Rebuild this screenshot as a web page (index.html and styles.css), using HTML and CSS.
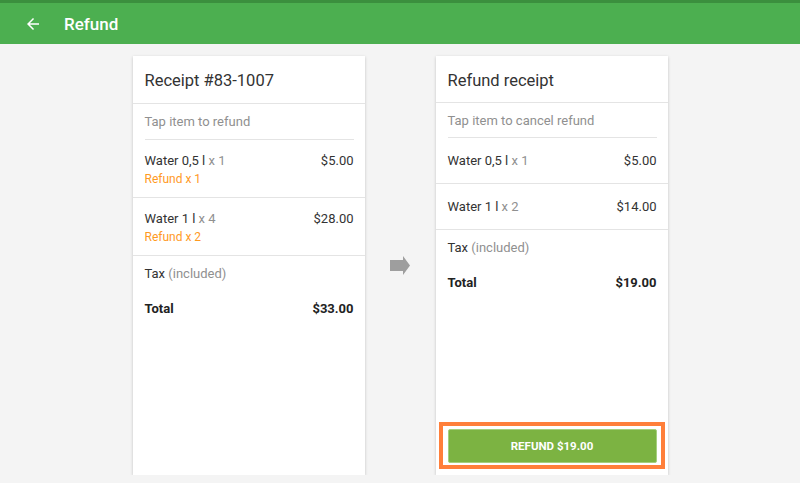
FILE: index.html
```html
<!DOCTYPE html>
<html lang="en">
<head>
    <meta charset="UTF-8">
    <title>Refund</title>
    <link rel="stylesheet" href="styles.css">
</head>
<body>
<header class="topbar">
    <svg class="back" viewBox="0 0 24 24" width="18" height="18">
        <path fill="#fff" d="M20 11H7.83l5.59-5.59L12 4l-8 8 8 8 1.41-1.41L7.83 13H20v-2z"/>
    </svg>
    <span class="title">Refund</span>
</header>

<main class="content">
    <section class="card">
        <h2 class="card-title">Receipt #83-1007</h2>
        <div class="hint">Tap item to refund</div>
        <div class="item">
            <div class="row">
                <span>Water 0,5 l <span class="qty">x 1</span></span>
                <span>$5.00</span>
            </div>
            <div class="refunded">Refund x 1</div>
        </div>
        <div class="item">
            <div class="row">
                <span>Water 1 l <span class="qty">x 4</span></span>
                <span>$28.00</span>
            </div>
            <div class="refunded">Refund x 2</div>
        </div>
        <div class="summary">
            <div class="row">Tax <span class="qty">&nbsp;(included)</span></div>
            <div class="row total">
                <span>Total</span>
                <span>$33.00</span>
            </div>
        </div>
    </section>

    <div class="arrow">
        <svg viewBox="0 0 20 19" width="20" height="19">
            <path fill="#9e9e9e" d="M0 4h13V0l7 9.5-7 9.5v-4H0z"/>
        </svg>
    </div>

    <section class="card refund-card">
        <h2 class="card-title">Refund receipt</h2>
        <div class="hint">Tap item to cancel refund</div>
        <div class="item short">
            <div class="row">
                <span>Water 0,5 l <span class="qty">x 1</span></span>
                <span>$5.00</span>
            </div>
        </div>
        <div class="item short">
            <div class="row">
                <span>Water 1 l <span class="qty">x 2</span></span>
                <span>$14.00</span>
            </div>
        </div>
        <div class="summary">
            <div class="row">Tax <span class="qty">&nbsp;(included)</span></div>
            <div class="row total">
                <span>Total</span>
                <span>$19.00</span>
            </div>
        </div>
        <div class="highlight">
            <button class="refund-btn" type="button">REFUND $19.00</button>
        </div>
    </section>
</main>
</body>
</html>
```

FILE: styles.css
```css
* {
    box-sizing: border-box;
}

body {
    margin: 0;
    background-color: #f4f4f4;
    font-family: Roboto, "Liberation Sans", sans-serif;
    color: #333;
}

.topbar {
    height: 44px;
    background-color: #4caf50;
    border-top: 3px solid #3b8f3e;
    display: flex;
    align-items: center;
    color: white;
}

.back {
    margin-left: 24px;
    margin-right: 22px;
}

.title {
    font-size: 17px;
    font-weight: 500;
}

.content {
    display: flex;
    justify-content: center;
    padding-top: 12px;
}

.card {
    width: 232px;
    height: 419px;
    background-color: white;
    box-shadow: 0 1px 3px rgba(0,0,0,0.2);
    display: flex;
    flex-direction: column;
}

.card-title {
    margin: 0;
    padding: 2px 12px 0;
    height: 48px;
    line-height: 46px;
    font-size: 16.5px;
    font-weight: 400;
    color: #333;
    border-bottom: 1px solid #e4e4e4;
}

.hint {
    margin: 0 11px 0 12px;
    padding-top: 1px;
    height: 36px;
    line-height: 34px;
    font-size: 13px;
    color: #909090;
    border-bottom: 1px solid #e4e4e4;
}

.item {
    padding: 12px 11px 9px 12px;
    border-bottom: 1px solid #e4e4e4;
    font-size: 13px;
}

.row {
    display: flex;
    justify-content: space-between;
    line-height: 18px;
}

.qty {
    color: #909090;
    margin-right: auto;
}

.refunded {
    color: #ff9a1f;
    font-size: 12px;
    line-height: 18px;
}

.summary {
    padding: 9px 11px 0 12px;
    font-size: 13px;
}

.total {
    margin-top: 17px;
    font-weight: bold;
    color: #222;
}

.arrow {
    width: 71px;
    display: flex;
    align-items: center;
    justify-content: center;
}

.refund-card .card-title {
    height: 47px;
    line-height: 45px;
}

.refund-card .hint {
    height: 35px;
    line-height: 33px;
}

.item.short {
    padding-top: 14px;
    padding-bottom: 13px;
}

.highlight {
    margin: auto 3px 6px 3px;
    border: 4px solid #ff7f3a;
    padding: 3px 4px 2px 5px;
}

.refund-btn {
    display: block;
    width: 100%;
    height: 34px;
    background-color: #7cb342;
    color: white;
    border: 1px solid #a5cf7e;
    border-radius: 2px;
    font-family: Roboto, "Liberation Sans", sans-serif;
    font-size: 11.5px;
    font-weight: bold;
}
```
